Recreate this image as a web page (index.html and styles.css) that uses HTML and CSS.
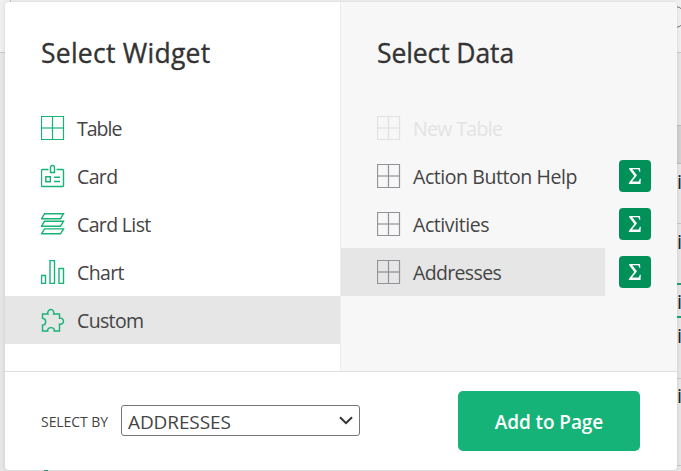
FILE: index.html
```html
<!DOCTYPE html>
<html lang="en">
<head>
<meta charset="utf-8">
<title>Add widget</title>
<link rel="stylesheet" href="styles.css">
</head>
<body>
<svg width="0" height="0" class="defs">
  <symbol id="grid" viewBox="0 0 24 24"><path d="M.5.5h22v23h-22zM11.5.5v23" stroke-width="1.200"/><path d="M.5 12h22" stroke-width="1.700" opacity=".8"/></symbol>
  <symbol id="sigma" viewBox="0 0 14 18"><path d="M1 1h11l.3 3.800h-1L10.300 2.200H4.200l4.800 6-5 6.400h6.800l1-2.800h1L12.500 17H.8v-1L6.300 9 1 2z"/></symbol>
</svg>
<div class="backdrop">
  <i class="rule top-left"></i><i class="rule top-left-v"></i>
  <i class="ring"></i>
  <i class="rule r1"></i><i class="head"></i>
  <i class="rule r2"></i><i class="rule r3"></i><i class="rule r4"></i>
  <i class="cursor c1"></i><i class="cursor c2"></i><i class="cursor c3"></i>
  <span class="cell t1">i</span><span class="cell t2">i</span><span class="cell t3">i</span><span class="cell t4">i</span><span class="cell t5">i</span>
</div>
<main class="dialog">
  <div class="panels">
    <section class="panel widgets">
      <h2>Select Widget</h2>
      <div class="row"><svg class="icon"><use href="#grid"/></svg><span class="short">Table</span></div>
      <div class="row"><svg class="icon" viewBox="0 0 24 24"><path d="M7.500 5.500h-6a1 1 0 0 0-1 1v15a1 1 0 0 0 1 1h20a1 1 0 0 0 1-1v-15a1 1 0 0 0-1-1h-6M9.500 8.500v-5a2 2 0 0 1 4 0v5zM4.800 12.800h4.500v5H4.800zM13 13.200h6M13 17.500h6"/></svg><span>Card</span></div>
      <div class="row"><svg class="icon" viewBox="0 0 24 24"><path d="M3.500 1.800h19l-3 4.900h-19zM3.500 9.300h19l-3 4.900h-19zM3.500 16.900h19l-3 4.900h-19z"/></svg><span>Card List</span></div>
      <div class="row"><svg class="icon" viewBox="0 0 24 24"><path d="M.5 15.500h4v8h-4zM9 .5h4.500v23H9zM18 8.500h4.500v15H18z"/></svg><span>Chart</span></div>
      <div class="row selected"><svg class="icon" viewBox="0 0 24 24"><path d="M1.500 6H7a3.100 3.100 0 1 1 5.600 0H18.500v4.200c2.300-.5 4 1 4 3s-1.700 3.500-4 3v6.800h-5.200c.3-2-1.200-3.400-3.300-3.400s-3.600 1.400-3.300 3.400H1.500v-5.800c2-.2 3.200-1.700 3.200-3.500s-1.200-3.300-3.200-3.500z"/></svg><span>Custom</span></div>
    </section>
    <section class="panel data">
      <h2>Select Data</h2>
      <div class="row disabled"><svg class="icon"><use href="#grid"/></svg><span>New Table</span></div>
      <div class="line"><div class="row"><svg class="icon"><use href="#grid"/></svg><span class="wide">Action Button Help</span></div><b class="sum"><svg><use href="#sigma"/></svg></b></div>
      <div class="line"><div class="row"><svg class="icon"><use href="#grid"/></svg><span class="wide">Activities</span></div><b class="sum"><svg><use href="#sigma"/></svg></b></div>
      <div class="line"><div class="row selected"><svg class="icon"><use href="#grid"/></svg><span>Addresses</span></div><b class="sum"><svg><use href="#sigma"/></svg></b></div>
    </section>
  </div>
  <footer>
    <label>SELECT BY</label>
    <div class="select"><span>ADDRESSES</span><svg viewBox="0 0 14 9"><path d="M1 1.200l6 6 6-6"/></svg></div>
    <button>Add to Page</button>
  </footer>
</main>
</body>
</html>
```
FILE: styles.css
```css
* { box-sizing: border-box; }
body { margin: 0; width: 681px; height: 471px; overflow: hidden; background: #e6e6e6; font-family: "Open Sans", "Noto Sans", sans-serif; color: #444; position: relative; }
.defs { position: absolute; }
.backdrop { position: absolute; inset: 0; background: linear-gradient(#f0f0f0 0 52px, #e6e6e6 52px); }
.backdrop > * { position: absolute; }
.rule { height: 1px; background: #c8c8c8; left: 676px; width: 5px; }
.top-left { left: 0; top: 52px; }
.top-left-v { left: 10px; top: 0; width: 1px; height: 2px; }
.ring { left: 664px; top: 6px; width: 22px; height: 22px; border: 1px solid #777; border-radius: 50%; }
.r1 { top: 52px; }
.head { left: 676px; top: 125px; width: 5px; height: 39px; background: #d2d2d2; border: solid #bbb; border-width: 1px 0; }
.r2 { top: 223px; }
.r3 { top: 378px; }
.r4 { top: 465px; }
.cursor { left: 677px; width: 4px; height: 2px; background: #16a873; }
.c1 { top: 283px; }
.c2 { top: 316px; }
.c3 { left: 44px; top: 470px; }
.cell { left: 677px; font-size: 20px; line-height: 26px; color: #222; }
.t1 { top: 169px; }
.t2 { top: 229px; }
.t3 { top: 289px; }
.t4 { top: 323px; }
.t5 { top: 383px; }

.dialog { position: relative; margin: 2px 0 0 5px; width: 672px; height: 468px; background: #fff; border-radius: 4px; overflow: hidden; box-shadow: 0 0 4px rgba(0,0,0,.12); }
.panels { display: flex; height: 370px; border-bottom: 1px solid #dedede; }
.panel { padding-top: 23px; }
.widgets { width: 335px; }
.data { width: 337px; background: #f7f7f7; border-left: 1px solid #ececec; }
h2 { margin: 0 0 23px 36px; height: 56px; font-size: 26.500px; line-height: 56px; font-weight: 500; letter-spacing: .25px; -webkit-text-stroke: .35px #333; color: #333; white-space: nowrap; }
.data h2 { letter-spacing: -.1px; }
.row { display: flex; align-items: center; gap: 12px; height: 48px; padding-left: 36px; font-size: 19.500px; letter-spacing: -.65px; white-space: nowrap; }
.row .short { letter-spacing: -1px; }
.row .wide { letter-spacing: -.43px; }
.data .row { width: 264px; }
.selected { background: #e6e6e6; }
.icon { flex: none; width: 24px; height: 24px; fill: none; stroke: #16b378; stroke-width: 1.400; }
.data .icon { stroke: #929299; }
.disabled { color: #e3e3e3; }
.data .disabled .icon { stroke: #e1e1e1; }
.line { display: flex; align-items: center; gap: 14px; }
.sum { width: 32px; height: 32px; border-radius: 4px; background: #009058; display: flex; align-items: center; justify-content: center; }
.sum svg { width: 14px; height: 18px; fill: #fff; }
footer { display: flex; align-items: center; height: 98px; padding-left: 36px; }
label { width: 80px; font-size: 14px; letter-spacing: -.05px; white-space: nowrap; }
.select { display: flex; align-items: center; justify-content: space-between; width: 239px; height: 31px; margin-top: -1px; border: 1px solid #757575; border-radius: 3px; padding: 0 6px; font-size: 19px; letter-spacing: -.1px; }
.select span { padding-top: 3px; }
.select svg { width: 14px; height: 9px; fill: none; stroke: #333; stroke-width: 2; }
button { margin-left: 98px; width: 182px; height: 60px; border: 0; border-radius: 5px; background: #16b378; color: #fff; font: 600 19px "Open Sans", sans-serif; letter-spacing: -.1px; padding: 1px 0 0; }
```
